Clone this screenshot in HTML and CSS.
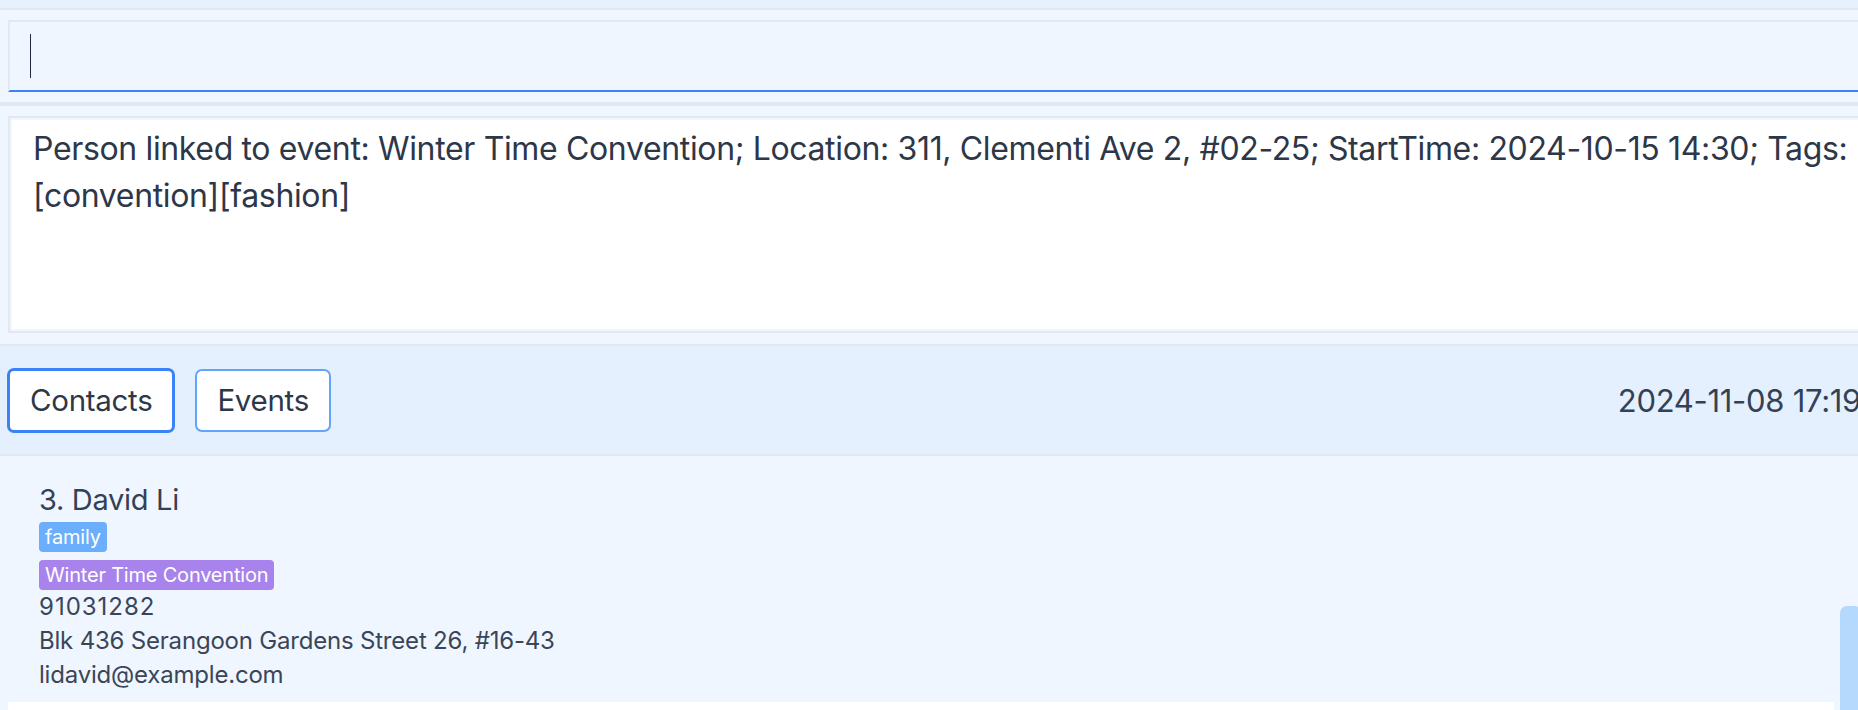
FILE: index.html
```html
<!DOCTYPE html>
<html lang="en">
<head>
<meta charset="utf-8">
<title>Address Book</title>
<link rel="stylesheet" href="styles.css">
</head>
<body>
<div class="app">
  <div class="menubar"></div>
  <section class="command-section">
    <div class="command-box"><span class="caret"></span></div>
  </section>
  <div class="divider"></div>
  <section class="result-section">
    <div class="result-box">
      <div class="result-inner">Person linked to event: Winter Time Convention; Location: 311, Clementi Ave 2, #02-25; StartTime: 2024-10-15 14:30; Tags: <span class="nowrap">[convention][fashion]</span></div>
    </div>
  </section>
  <div class="tabbar">
    <button class="tab tab-active">Contacts</button>
    <button class="tab">Events</button>
    <div class="clock">2024-11-08 17:19</div>
  </div>
  <div class="list">
    <div class="card card-odd">
      <div class="name">3. David Li</div>
      <div class="tags tags-first"><span class="tag tag-blue">family</span></div>
      <div class="tags"><span class="tag tag-purple">Winter Time Convention</span></div>
      <div class="field phone">91031282</div>
      <div class="field">Blk 436 Serangoon Gardens Street 26, #16-43</div>
      <div class="field">lidavid@example.com</div>
    </div>
    <div class="card card-even"></div>
    <div class="scroll-thumb"></div>
  </div>
</div>
</body>
</html>
```

FILE: styles.css
```css
html, body {
  margin: 0;
  padding: 0;
  background: #eff6ff;
  overflow: hidden;
  height: 710px;
}

.app {
  width: 1900px;
  font-family: Inter, "Noto Sans", sans-serif;
  color: #2d3748;
  display: flex;
  flex-direction: column;
}

.menubar {
  height: 8px;
  background: #e6f1fd;
  border-bottom: 2px solid #e2e8f0;
}

.command-section {
  padding: 10px 0 10px 8px;
}

.command-box {
  border-top: 2px solid #e2e8f0;
  border-left: 2px solid #e2e8f0;
  border-bottom: 2px solid #3b82f6;
  background: #eff6ff;
  padding: 12px 0 0 20px;
  box-sizing: border-box;
  height: 72px;
}

.caret {
  display: block;
  width: 1px;
  height: 44px;
  background: #1e293b;
}

.divider {
  height: 4px;
  background: #e2e8f0;
}

.result-section {
  padding: 10px 0 11px 8px;
  border-bottom: 2px solid #e2e8f0;
}

.result-box {
  border: 2px solid #e2e8f0;
  padding: 2px;
  background: #eff6ff;
}

.result-inner {
  background: #ffffff;
  height: 209px;
  box-sizing: border-box;
  padding: 5px 40px 0 21px;
  font-size: 32px;
  line-height: 47px;
  color: #2d3748;
  letter-spacing: -0.35px;
}

.nowrap {
  white-space: nowrap;
}

.tabbar {
  height: 108px;
  background: #e4f0fd;
  border-bottom: 2px solid #e2e8f0;
  display: flex;
  align-items: center;
  padding: 0 39px 0 7px;
  gap: 20px;
}

.tab {
  font-family: Inter, "Noto Sans", sans-serif;
  font-size: 29.5px;
  color: #2d3748;
  background: #ffffff;
  border: 2px solid #60a5fa;
  border-radius: 7px;
  height: 63px;
  padding: 0 20px;
  margin: 0;
  letter-spacing: -0.3px;
}

.tab-active {
  border: 3px solid #3b82f6;
  height: 65px;
  padding: 0 20px;
}

.clock {
  margin-left: auto;
  font-size: 31px;
  color: #334155;
  letter-spacing: -0.3px;
  white-space: nowrap;
}

.list {
  position: relative;
  height: 256px;
  padding-left: 8px;
}

.card {
  width: 1826px;
  box-sizing: border-box;
  padding: 26px 0 0 31px;
}

.card-odd {
  height: 246px;
  background: #eff6ff;
}

.card-even {
  height: 40px;
  background: #ffffff;
}

.name {
  font-size: 29px;
  line-height: 36px;
  color: #334155;
  letter-spacing: -0.3px;
}

.tags {
  display: flex;
  margin-top: 8px;
}

.tags-first {
  margin-top: 4px;
}

.tag {
  display: inline-block;
  color: #ffffff;
  font-size: 20px;
  line-height: 30px;
  padding: 0 6px;
  border-radius: 4px;
  letter-spacing: -0.2px;
}

.tag-blue {
  background: #6aaefc;
}

.tag-purple {
  background: #a783eb;
}

.field {
  font-size: 24px;
  line-height: 34px;
  color: #3a4658;
  letter-spacing: -0.2px;
}

.phone {
  letter-spacing: 1px;
}

.scroll-thumb {
  position: absolute;
  left: 1840px;
  top: 150px;
  width: 22px;
  height: 200px;
  border-radius: 7px;
  background: #b5d8fd;
}
```
